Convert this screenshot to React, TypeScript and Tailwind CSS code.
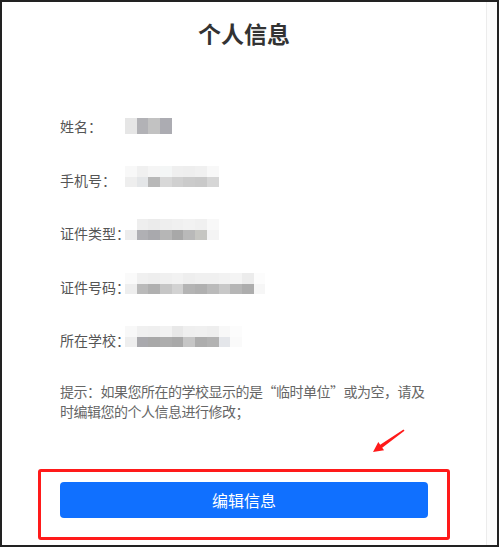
const FONT = "font-['Noto_Sans_CJK_SC','Microsoft_YaHei',sans-serif]";

type Mosaic = { top?: string[]; bottom: string[]; single?: boolean };

const rows: { label: string; mosaic: Mosaic }[] = [
  {
    label: "姓名：",
    mosaic: {
      single: true,
      bottom: ["bg-[#e6e6e6]", "bg-[#b2b2b6]", "bg-[#c2c2c2]", "bg-[#acacb2]"],
    },
  },
  {
    label: "手机号：",
    mosaic: {
      top: ["bg-[#f8f8f8]", "bg-[#f0f0f0]", "bg-[#f5f5f5]", "bg-[#f4f6f6]", "bg-[#efefef]", "bg-[#eeeeee]", "bg-[#f0f0f0]", "bg-[#f8f8f8]"],
      bottom: ["bg-[#eeeeee]", "bg-[#e4e6e8]", "bg-[#b8b8b8]", "bg-[#d8d8d8]", "bg-[#d0d0d0]", "bg-[#cbcbcb]", "bg-[#c9c9c9]", "bg-[#d6d6d6]"],
    },
  },
  {
    label: "证件类型：",
    mosaic: {
      top: ["bg-[#ffffff]", "bg-[#eeeeee]", "bg-[#ebebeb]", "bg-[#eeeeee]", "bg-[#f0f0f0]", "bg-[#f2f2f2]", "bg-[#f0f0f0]", "bg-[#f8f8f8]"],
      bottom: ["bg-[#ececec]", "bg-[#b0b0b4]", "bg-[#a9a9ad]", "bg-[#b6b6b6]", "bg-[#a8a8a8]", "bg-[#b9b9b9]", "bg-[#c6c6c2]", "bg-[#f4f4f4]"],
    },
  },
  {
    label: "证件号码：",
    mosaic: {
      top: ["bg-[#fafafa]", "bg-[#f0f0f0]", "bg-[#eeeeee]", "bg-[#f0f0f0]", "bg-[#f2f2f2]", "bg-[#eeeeee]", "bg-[#f0f0f0]", "bg-[#f0f0f0]", "bg-[#f2f2f2]", "bg-[#f4f4f4]", "bg-[#ececec]", "bg-[#fcfcfc]"],
      bottom: ["bg-[#eeeeee]", "bg-[#bababa]", "bg-[#b0b0b0]", "bg-[#c6c6c6]", "bg-[#d2d2d2]", "bg-[#b4b4b4]", "bg-[#b0b0b0]", "bg-[#bababa]", "bg-[#c8c8c8]", "bg-[#b6b6b6]", "bg-[#adadad]", "bg-[#f6f6f6]"],
    },
  },
  {
    label: "所在学校：",
    mosaic: {
      top: ["bg-[#f8f8f8]", "bg-[#f0f0f0]", "bg-[#efefef]", "bg-[#f2f2f2]", "bg-[#e8e8e8]", "bg-[#efefef]", "bg-[#f0f0f0]", "bg-[#eeeeee]", "bg-[#f8f8f8]", "bg-[#fcfcfc]"],
      bottom: ["bg-[#eeeeee]", "bg-[#a9a9ad]", "bg-[#a8a8a8]", "bg-[#adadad]", "bg-[#a9a9a9]", "bg-[#c6c6c6]", "bg-[#adadad]", "bg-[#b2b2b2]", "bg-[#e4e6ea]", "bg-[#fafafa]"],
    },
  },
];

function MosaicBlock({ mosaic }: { mosaic: Mosaic }) {
  if (mosaic.single) {
    return (
      <div className="mb-[2px] flex">
        {mosaic.bottom.map((c, i) => (
          <div key={i} className={`h-[16px] w-[11.7px] ${c}`} />
        ))}
      </div>
    );
  }
  return (
    <div className="mb-[8px] flex flex-col">
      <div className="flex">
        {mosaic.top!.map((c, i) => (
          <div key={i} className={`h-[11px] w-[11.7px] ${c}`} />
        ))}
      </div>
      <div className="flex">
        {mosaic.bottom.map((c, i) => (
          <div key={i} className={`h-[10px] w-[11.7px] ${c}`} />
        ))}
      </div>
    </div>
  );
}

export default function App() {
  return (
    <div className={`relative h-[549px] w-[500px] bg-white ${FONT}`}>
      <div className="flex h-[547px] w-[499px] border-2 border-[#222]">
        <div className="flex w-[485px] flex-col border-r border-[#ececec] pl-[58px] pt-[15px]">
          <h1 className="-ml-[58px] text-center text-[23px] font-bold leading-[32px] text-[#333]">
            个人信息
          </h1>

          <div className="mt-[51px] flex flex-col">
            {rows.map((row) => (
              <div key={row.label} className="flex h-[53.5px] items-center">
                <span className="w-[65px] shrink-0 whitespace-nowrap text-[14px] text-[#555]">
                  {row.label}
                </span>
                <MosaicBlock mosaic={row.mosaic} />
              </div>
            ))}
          </div>

          <p className="mt-[13px] w-[372px] text-[14px] leading-[20px] tracking-[-0.5px] text-[#666]">
            提示：如果您所在的学校显示的是“临时单位”或为空，请及时编辑您的个人信息进行修改；
          </p>

          <div className="-ml-[22px] mt-[48px] w-[412px] rounded-[3px] border-[3px] border-[#ff1a1a] pb-[19px] pl-[19px] pr-[19px] pt-[10px]">
            <button className="flex h-[36px] w-full items-center justify-center rounded-[4px] bg-[#1070ff] text-[16px] text-white">
              编辑信息
            </button>
          </div>
        </div>
        <div className="flex-1 bg-[#fcfcfc]" />
      </div>

      <svg className="absolute left-[370px] top-[426px]" width="40" height="30" viewBox="0 0 40 30">
        <polygon
          points="33.5,3.4 10.2,18.7 8.3,16.1 3,26 14.1,24.3 12.2,21.7 34.5,4.7"
          fill="#ff1a1a"
        />
      </svg>
    </div>
  );
}
